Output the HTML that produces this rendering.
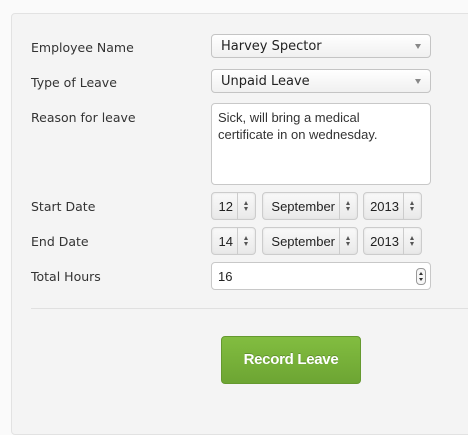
<!DOCTYPE html>
<html><head><style>
body{margin:0;width:468px;height:415px;background:#fafafa;position:relative;overflow:hidden;font-family:"DejaVu Sans",Verdana,sans-serif;}
.panel{position:absolute;left:11px;top:13px;width:470px;height:420px;background:#f4f4f4;border:1px solid #e2e2e2;border-radius:4px;}
.lbl{position:absolute;left:31px;font-size:12.5px;color:#333;}
.sel{position:absolute;left:211px;width:218px;height:22px;border:1px solid #c4c4c4;border-radius:4px;background:linear-gradient(#fff,#f0f0f0);font-size:13px;color:#222;box-sizing:content-box;}
.sel span{position:absolute;left:9px;top:4px;}
.sel i{position:absolute;right:9px;top:9px;width:0;height:0;border-left:3.5px solid transparent;border-right:3.5px solid transparent;border-top:5px solid #888;}
.ta{position:absolute;left:211px;top:103px;width:218px;height:80px;border:1px solid #c8c8c8;border-radius:4px;background:#fff;font-family:"Liberation Sans",Arial,sans-serif;font-size:13px;color:#333;line-height:17px;}
.ta div{position:absolute;left:6px;top:5px;}
.dd{position:absolute;height:26px;border:1px solid #ccc;border-radius:4px;background:linear-gradient(#f9f9f9,#e9e9e9);font-family:"Liberation Sans",Arial,sans-serif;font-size:13px;color:#222;box-shadow:inset 0 0 2px #ddd;}
.dd span{position:absolute;right:22px;top:6px;}
.dd b{position:absolute;right:17px;top:0;bottom:0;border-left:1px solid #ccc;}
.dd i{position:absolute;right:6px;top:8px;width:5px;height:11px;}
.dd i:before{content:"";position:absolute;left:0;top:0;border-left:2.5px solid transparent;border-right:2.5px solid transparent;border-bottom:4px solid #555;}
.dd i:after{content:"";position:absolute;left:0;top:6px;border-left:2.5px solid transparent;border-right:2.5px solid transparent;border-top:4px solid #555;}
.num{position:absolute;left:211px;top:262px;width:218px;height:26px;border:1px solid #c8c8c8;border-radius:4px;background:#fff;font-family:"Liberation Sans",Arial,sans-serif;font-size:13px;color:#222;}
.hr{position:absolute;left:31px;top:308px;width:440px;border-top:1px solid #e0e0e0;}
.btn{position:absolute;left:221px;top:336px;width:138px;height:46px;border:1px solid #65992f;border-radius:4px;background:linear-gradient(#82bd40,#6da533);color:#fff;font-family:"Liberation Sans",Arial,sans-serif;font-size:15px;font-weight:bold;text-align:center;line-height:46px;letter-spacing:-0.3px;text-shadow:0 -1px 0 rgba(0,0,0,.2);}
</style></head><body>
<div class="panel"></div>
<div class="lbl" style="top:40px">Employee Name</div>
<div class="lbl" style="top:75px">Type of Leave</div>
<div class="lbl" style="top:110px">Reason for leave</div>
<div class="lbl" style="top:199px">Start Date</div>
<div class="lbl" style="top:234px">End Date</div>
<div class="lbl" style="top:269px">Total Hours</div>
<div class="sel" style="top:34px"><span>Harvey Spector</span><i></i></div>
<div class="sel" style="top:69px"><span>Unpaid Leave</span><i></i></div>
<div class="ta"><div>Sick, will bring a medical<br>certificate in on wednesday.</div></div>
<div class="dd" style="left:211px;top:192px;width:43px"><span>12</span><b></b><i></i></div>
<div class="dd" style="left:262px;top:192px;width:94px"><span>September</span><b></b><i></i></div>
<div class="dd" style="left:363px;top:192px;width:57px"><span>2013</span><b></b><i></i></div>
<div class="dd" style="left:211px;top:227px;width:43px"><span>14</span><b></b><i></i></div>
<div class="dd" style="left:262px;top:227px;width:94px"><span>September</span><b></b><i></i></div>
<div class="dd" style="left:363px;top:227px;width:57px"><span>2013</span><b></b><i></i></div>
<div class="num"><span style="position:absolute;left:6px;top:6px">16</span>
<div style="position:absolute;right:4px;top:5px;width:8px;height:15px;border:1px solid #999;border-radius:4px;background:#f6f6f6"><div style="position:absolute;left:1.5px;top:3px;border-left:2.5px solid transparent;border-right:2.5px solid transparent;border-bottom:3px solid #333"></div><div style="position:absolute;left:1.5px;top:9px;border-left:2.5px solid transparent;border-right:2.5px solid transparent;border-top:3px solid #333"></div></div></div>
<div class="hr"></div>
<div class="btn">Record Leave</div>
</body></html>
